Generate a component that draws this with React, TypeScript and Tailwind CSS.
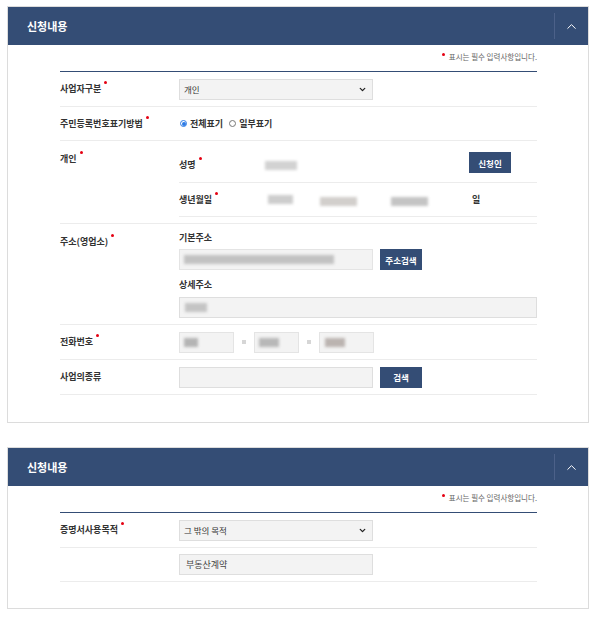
import { ChevronUp, ChevronDown } from "lucide-react";
import type { ReactNode } from "react";

// --- small pieces ---
function Req() {
  return <span className="relative -top-[7px] ml-[3px] inline-block h-[3px] w-[3px] rounded-full bg-[#e50012] align-middle" />;
}

function Blur({ w, tone = "#c4c4c4" }: { w: number; tone?: string }) {
  return (
    <span
      className="inline-block h-[9px] blur-[1.5px]"
      style={{ width: w, backgroundColor: tone }}
    />
  );
}

function NavyButton({ children }: { children: ReactNode }) {
  return (
    <button className="flex h-[21px] w-[42px] items-center justify-center bg-[#344d75] text-[8.5px] font-bold text-white">
      {children}
    </button>
  );
}

function SelectBox({ value }: { value: string }) {
  return (
    <div className="flex h-[21px] w-[194px] items-center justify-between border border-[#dedede] bg-[#f3f3f3] pl-[4px] pr-[5px] text-[8.5px] text-[#333]">
      <span>{value}</span>
      <ChevronDown size={9} strokeWidth={3.5} className="text-[#222]" />
    </div>
  );
}

function Row({ label, req, children, className = "" }: { label?: string; req?: boolean; children: ReactNode; className?: string }) {
  return (
    <div className={`flex border-b border-[#ececec] ${className}`}>
      <div className="w-[119px] shrink-0 text-[9px] font-bold text-[#333]">
        {label}
        {req && <Req />}
      </div>
      <div className="flex-1">{children}</div>
    </div>
  );
}

function Panel({ children }: { children: ReactNode }) {
  return (
    <section className="border border-[#dcdcdc] bg-white">
      <header className="flex h-[38px] items-center bg-[#344d75]">
        <h2 className="flex-1 pl-[19px] text-[11px] font-bold text-white">신청내용</h2>
        <div className="h-[26px] w-px bg-[#4c6189]" />
        <button className="flex w-[33px] justify-center text-white">
          <ChevronUp size={15} strokeWidth={1.6} />
        </button>
      </header>
      <div className="pl-[52px] pr-[51px] pt-[6px]">
        <p className="h-[12px] text-right text-[7.5px] leading-[12px] text-[#666]">
          <span className="relative -top-[3px] mr-[4px] inline-block h-[3px] w-[3px] rounded-full bg-[#e50012] align-middle" />
          표시는 필수 입력사항입니다.
        </p>
        <div className="mt-[8px] border-t border-[#344d75]">{children}</div>
      </div>
    </section>
  );
}

export default function App() {
  return (
    <div
      className="min-h-screen bg-white pt-[6px] pl-[7px] pr-[11px] leading-[12px]"
      style={{ fontFamily: '"Noto Sans CJK KR", "Noto Sans", sans-serif' }}
    >
      {/* === PANEL 1 === */}
      <Panel>
        <div className="pb-[27px]">
          {/* 사업자구분 */}
          <Row label="사업자구분" req className="h-[35px] items-center">
            <SelectBox value="개인" />
          </Row>

          {/* 주민등록번호표기방법 */}
          <Row label="주민등록번호표기방법" req className="h-[34px] items-center">
            <div className="flex items-center text-[9px] font-bold text-[#333]">
              <span className="mr-[3px] ml-[1px] flex h-[7px] w-[7px] items-center justify-center rounded-full border border-[#2d7be5] bg-white">
                <span className="h-[4px] w-[4px] rounded-full bg-[#2d7be5]" />
              </span>
              전체표기
              <span className="mr-[3px] ml-[6px] h-[7px] w-[7px] rounded-full border border-[#777] bg-white" />
              일부표기
            </div>
          </Row>

          {/* 개인 */}
          <Row label="개인" req className="h-[83px] [&>div:first-child]:pt-[12px]">
            <div className="pt-[7px]">
              <div className="flex h-[35px] items-center border-b border-[#ececec]">
                <div className="w-[86px] text-[9px] font-bold text-[#333]">
                  성명<Req />
                </div>
                <Blur w={32} tone="#d2d2d2" />
                <div className="ml-auto mr-[26px] -mt-[5px]">
                  <NavyButton>신청인</NavyButton>
                </div>
              </div>
              <div className="flex h-[34px] items-center border-b border-[#ececec]">
                <div className="w-[89px] text-[9px] font-bold text-[#333]">
                  생년월일<Req />
                </div>
                <Blur w={25} tone="#cdcdcd" />
                <span className="ml-[27px]"><Blur w={37} tone="#d2cfcc" /></span>
                <span className="ml-[34px]"><Blur w={37} tone="#c4c4c4" /></span>
                <span className="ml-[44px] text-[9px] font-bold text-[#333]">일</span>
              </div>
            </div>
          </Row>

          {/* 주소(영업소) */}
          <Row label="주소(영업소)" req className="h-[101px] [&>div:first-child]:pt-[12px]">
            <div className="pt-[8px]">
              <div className="h-[12px] text-[9px] font-bold text-[#333]">기본주소</div>
              <div className="mt-[5px] flex items-center gap-[7px]">
                <div className="flex h-[21px] w-[194px] items-center border border-[#e4e4e4] bg-[#f3f3f3] pl-[4px]">
                  <Blur w={150} tone="#c2c2c2" />
                </div>
                <NavyButton>주소검색</NavyButton>
              </div>
              <div className="mt-[9px] h-[12px] text-[9px] font-bold text-[#333]">상세주소</div>
              <div className="mt-[6px] flex h-[21px] w-full items-center border border-[#dedede] bg-[#f3f3f3] pl-[5px]">
                <Blur w={22} tone="#c4c4c4" />
              </div>
            </div>
          </Row>

          {/* 전화번호 */}
          <Row label="전화번호" req className="h-[35px] items-center">
            <div className="flex items-center">
              <div className="flex h-[21px] w-[55px] items-center border border-[#e4e4e4] bg-[#f3f3f3] pl-[4px]">
                <Blur w={14} tone="#b4b4b4" />
              </div>
              <span className="mx-[8px] h-[4px] w-[4px] bg-[#d6d6d6]" />
              <div className="flex h-[21px] w-[45px] items-center border border-[#e4e4e4] bg-[#f3f3f3] pl-[4px]">
                <Blur w={20} tone="#b8b8b8" />
              </div>
              <span className="mx-[8px] h-[4px] w-[4px] bg-[#d6d6d6]" />
              <div className="flex h-[21px] w-[55px] items-center border border-[#e4e4e4] bg-[#f3f3f3] pl-[5px]">
                <Blur w={20} tone="#bbb4b0" />
              </div>
            </div>
          </Row>

          {/* 사업의종류 */}
          <Row label="사업의종류" className="h-[35px] items-center">
            <div className="flex items-center gap-[7px]">
              <div className="h-[21px] w-[194px] border border-[#dedede] bg-[#f3f3f3]" />
              <NavyButton>검색</NavyButton>
            </div>
          </Row>
        </div>
      </Panel>

      {/* === PANEL 2 === */}
      <div className="mt-[24px]">
        <Panel>
          <div className="pb-[26px]">
            <Row label="증명서사용목적" req className="h-[35px] items-center">
              <SelectBox value="그 밖의 목적" />
            </Row>
            <Row className="h-[34px] items-center">
              <div className="flex h-[21px] w-[194px] items-center border border-[#dedede] bg-[#f3f3f3] pl-[6px] text-[9px] text-[#444]">
                부동산계약
              </div>
            </Row>
          </div>
        </Panel>
      </div>
    </div>
  );
}
